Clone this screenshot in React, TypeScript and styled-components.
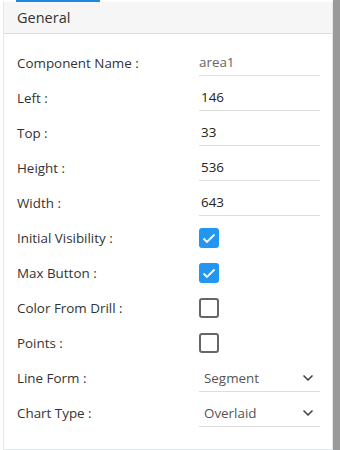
import React, { FC } from 'react';
import styled, { createGlobalStyle } from 'styled-components';
import { ChevronDown } from 'lucide-react';

const GlobalStyle = createGlobalStyle`
  html, body {
    margin: 0;
    padding: 0;
    background: #ffffff;
    font-family: 'Open Sans', 'Noto Sans', sans-serif;
  }
`;

const Page = styled.div`
  display: flex;
  width: 340px;
  height: 450px;
  overflow: hidden;
`;

const Main = styled.div`
  flex: 1;
  display: flex;
  flex-direction: column;
  padding-left: 3px;
`;

const TabStrip = styled.div`
  height: 2px;
  flex-shrink: 0;
  padding-left: 13px;
`;

const TabMark = styled.div`
  width: 84px;
  height: 2px;
  background: #1e88e5;
`;

const Panel = styled.div`
  flex: 1;
  border: 1px solid #e3e9eb;
  border-top: none;
  display: flex;
  flex-direction: column;
`;

const Header = styled.div`
  height: 31px;
  background: #f6f6f6;
  border-bottom: 1px solid #dcdcdc;
  display: flex;
  align-items: center;
  padding-left: 13px;
  font-size: 14.5px;
  color: #333333;
`;

const Body = styled.div`
  padding: 11px 0 0 13px;
  display: flex;
  flex-direction: column;
`;

const Row = styled.div`
  display: flex;
  align-items: center;
  height: 35.1px;
`;

const Label = styled.div`
  width: 182px;
  font-size: 13.4px;
  color: #333333;
`;

const Field = styled.div<{ $muted?: boolean }>`
  box-sizing: border-box;
  width: 121px;
  height: 27px;
  border-bottom: 1px solid #dddddd;
  display: flex;
  align-items: center;
  justify-content: space-between;
  padding: 0 0 0 ${(p) => (p.$muted ? '0' : '2px')};
  font-size: 13.4px;
  color: ${(p) => (p.$muted ? '#666666' : '#222222')};
`;

const Select = styled(Field)`
  padding: 0 4px 0 5px;
  color: #555555;
`;

const Box = styled.span<{ $checked?: boolean }>`
  width: 20px;
  height: 20px;
  box-sizing: border-box;
  border-radius: 3px;
  display: flex;
  align-items: center;
  justify-content: center;
  background: ${(p) => (p.$checked ? '#2196f3' : '#ffffff')};
  border: ${(p) => (p.$checked ? 'none' : '2px solid #666666')};
`;

const ScrollBar = styled.div`
  width: 7px;
  background: #9a9a9a;
`;

const Check: FC<{ checked?: boolean }> = ({ checked }) => (
  <Box $checked={checked}>
    {checked && (
      <svg width="16" height="16" viewBox="0 0 16 16">
        <path d="M2.5 8.5 L6 12 L13.5 4.5" fill="none" stroke="#ffffff" strokeWidth="1.8" />
      </svg>
    )}
  </Box>
);

const App: FC = () => {
  return (
    <>
      <GlobalStyle />
      <Page>
        <Main>
          <TabStrip>
            <TabMark />
          </TabStrip>
          <Panel>
            <Header>General</Header>
            <Body>
              <Row>
                <Label>Component Name :</Label>
                <Field $muted>area1</Field>
              </Row>
              <Row>
                <Label>Left :</Label>
                <Field>146</Field>
              </Row>
              <Row>
                <Label>Top :</Label>
                <Field>33</Field>
              </Row>
              <Row>
                <Label>Height :</Label>
                <Field>536</Field>
              </Row>
              <Row>
                <Label>Width :</Label>
                <Field>643</Field>
              </Row>
              <Row>
                <Label>Initial Visibility :</Label>
                <Check checked />
              </Row>
              <Row>
                <Label>Max Button :</Label>
                <Check checked />
              </Row>
              <Row>
                <Label>Color From Drill :</Label>
                <Check />
              </Row>
              <Row>
                <Label>Points :</Label>
                <Check />
              </Row>
              <Row>
                <Label>Line Form :</Label>
                <Select>
                  Segment
                  <ChevronDown size={16} strokeWidth={2.5} color="#444444" />
                </Select>
              </Row>
              <Row>
                <Label>Chart Type :</Label>
                <Select>
                  Overlaid
                  <ChevronDown size={16} strokeWidth={2.5} color="#444444" />
                </Select>
              </Row>
            </Body>
          </Panel>
        </Main>
        <ScrollBar />
      </Page>
    </>
  );
};

export default App;
